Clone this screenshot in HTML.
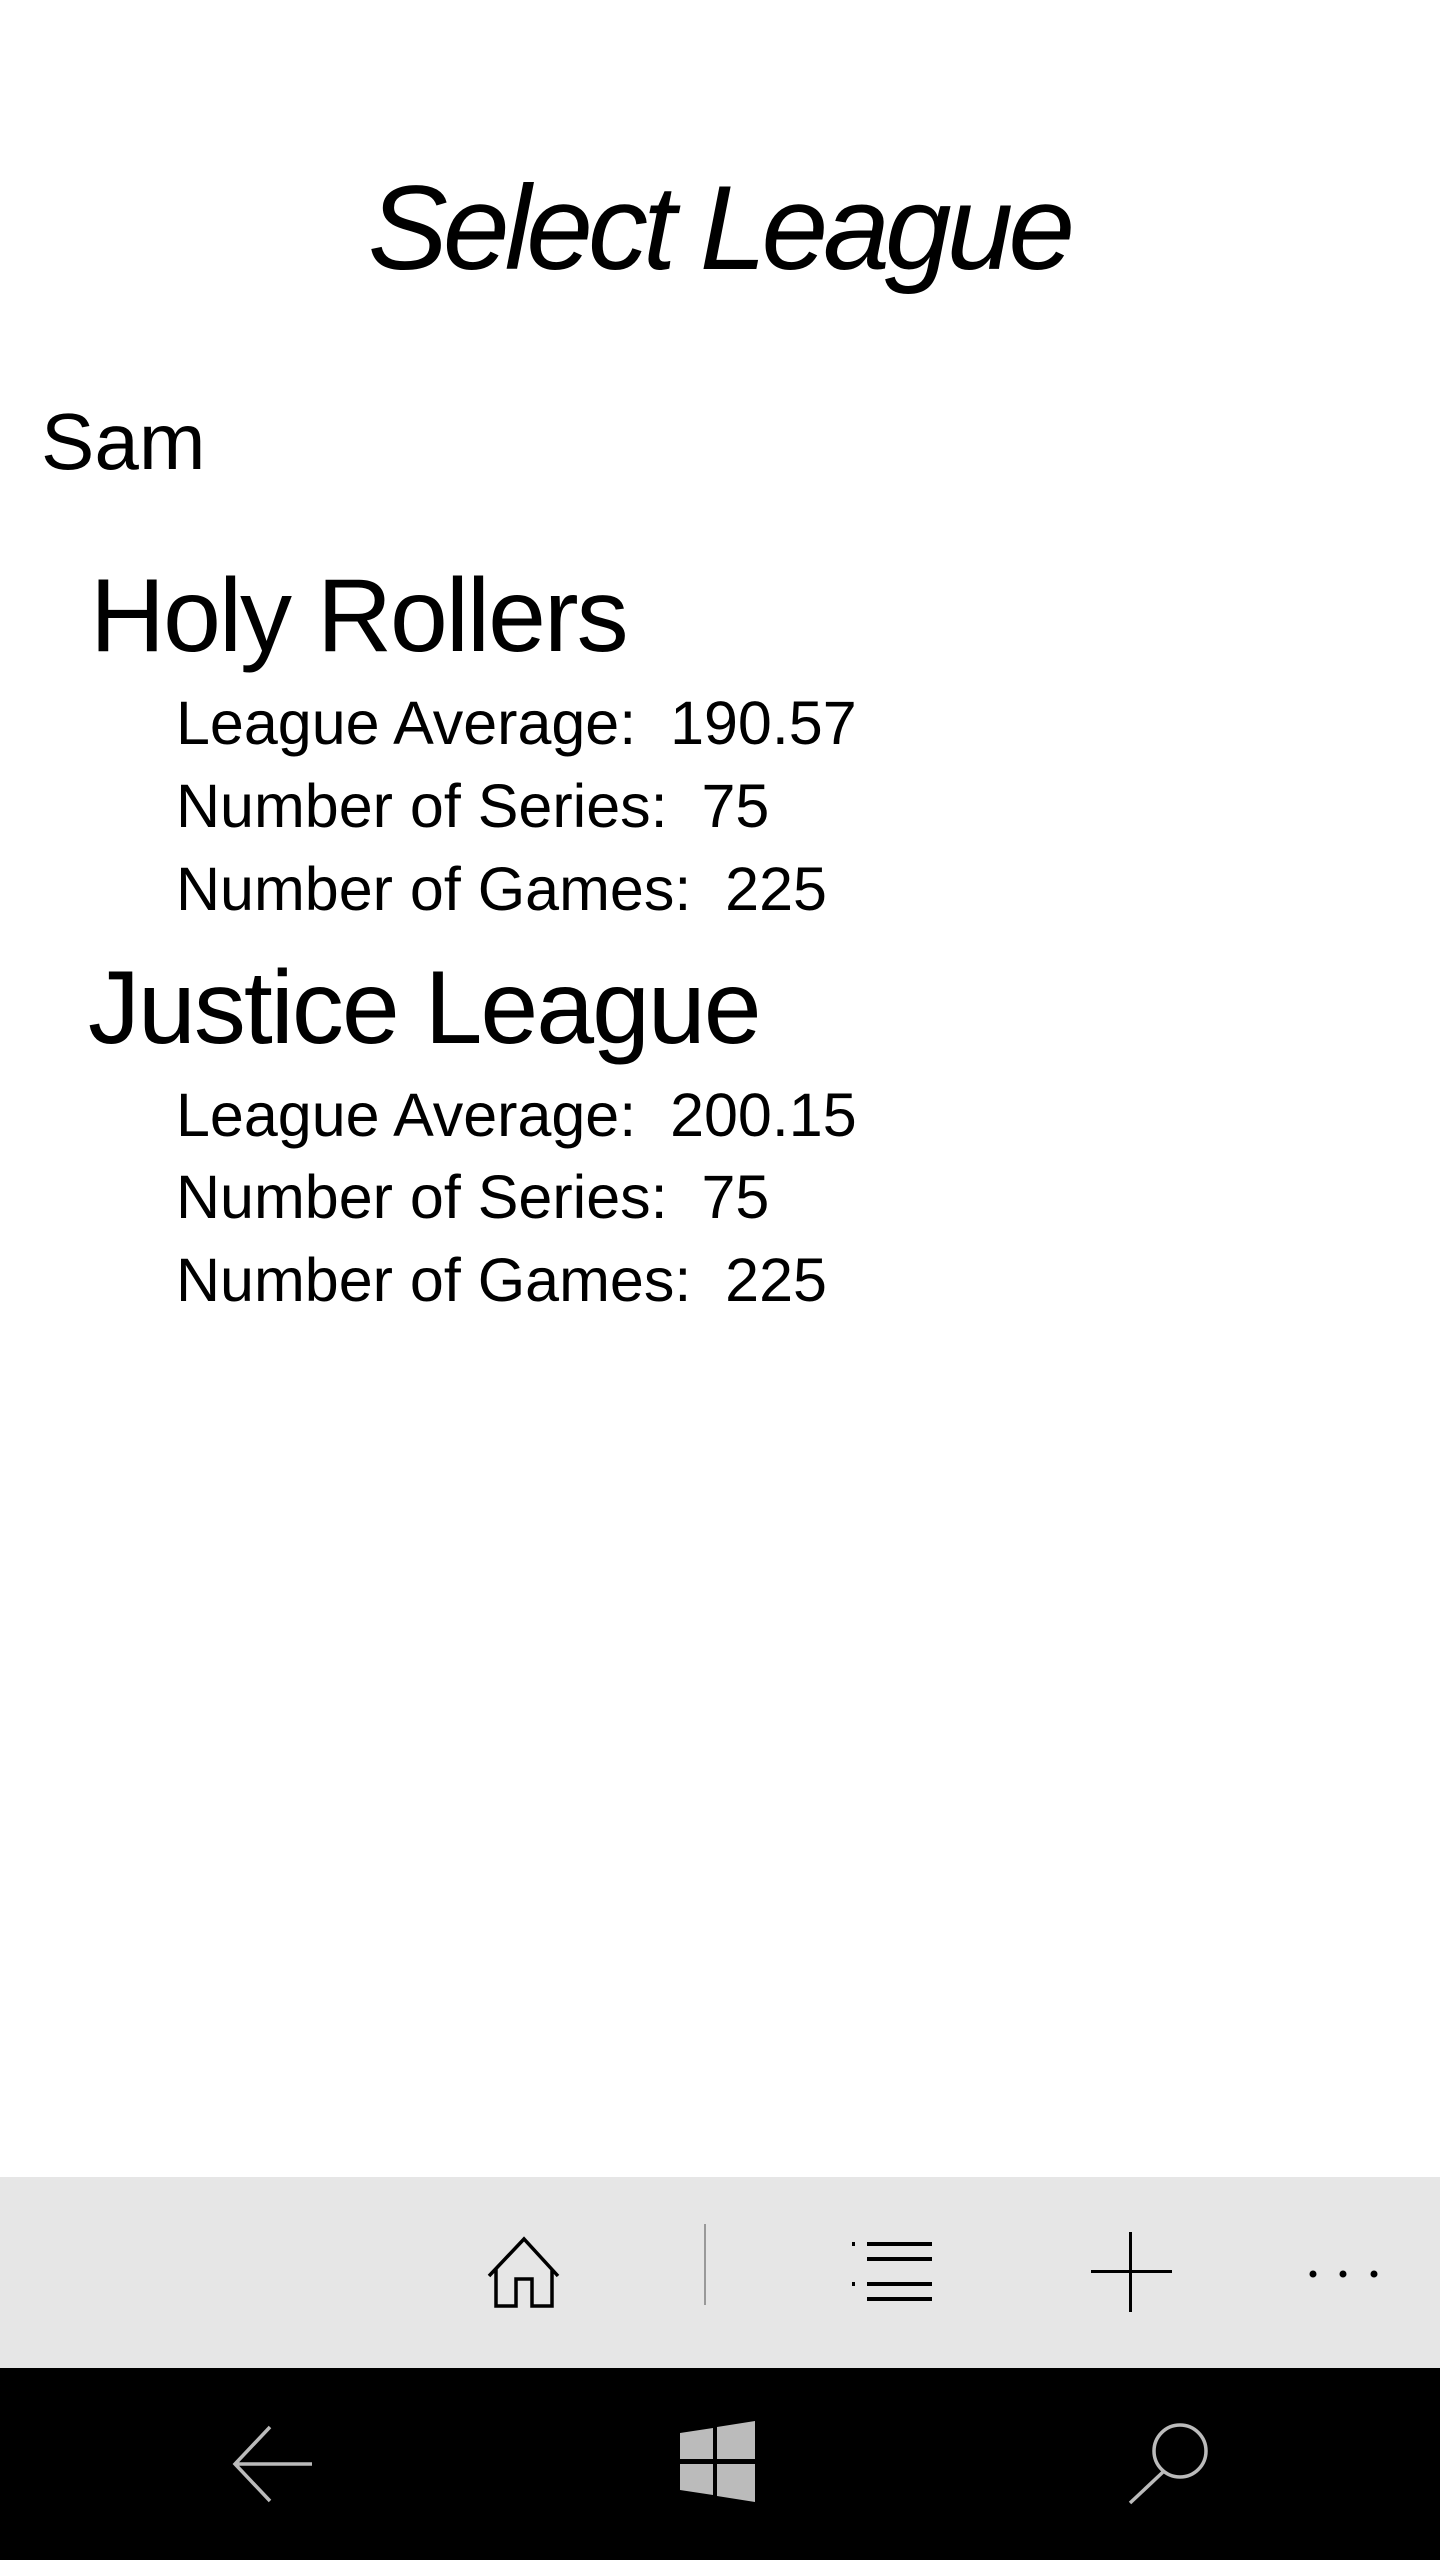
<!DOCTYPE html>
<html><head><meta charset="utf-8"><style>
html,body{margin:0;padding:0;}
body{width:1440px;height:2560px;position:relative;background:#fff;overflow:hidden;font-family:"Liberation Sans",sans-serif;color:#000;}
.t{position:absolute;line-height:1;white-space:pre;}
.d{font-size:61px;left:176px;}
</style></head><body>
<div class="t" style="font-size:120px;font-style:italic;letter-spacing:-5px;left:0;width:1438px;text-align:center;top:168px;">Select League</div>
<div class="t" style="font-size:80px;left:41px;top:402px;">Sam</div>
<div class="t" style="font-size:104px;left:90px;top:564px;letter-spacing:-2px;">Holy Rollers</div>
<div class="t d" style="top:693px;">League Average:  190.57</div>
<div class="t d" style="top:776px;">Number of Series:  75</div>
<div class="t d" style="top:859px;">Number of Games:  225</div>
<div class="t" style="font-size:104px;left:88px;top:956px;letter-spacing:-2px;">Justice League</div>
<div class="t d" style="top:1085px;">League Average:  200.15</div>
<div class="t d" style="top:1167px;">Number of Series:  75</div>
<div class="t d" style="top:1250px;">Number of Games:  225</div>

<div style="position:absolute;left:0;top:2177px;width:1440px;height:191px;background:#e6e6e6;"></div>
<div style="position:absolute;left:0;top:2368px;width:1440px;height:192px;background:#000;"></div>

<svg width="1440" height="2560" style="position:absolute;left:0;top:0" xmlns="http://www.w3.org/2000/svg">
 <!-- home -->
 <path d="M489 2276 L524 2239 L558 2276 M496 2269 V2306 H516 V2279 H532 V2306 H552 V2269" fill="none" stroke="#000" stroke-width="3.5"/>
 <!-- separator -->
 <rect x="704" y="2224" width="2" height="81" fill="#999"/>
 <!-- list -->
 <g fill="#000">
  <rect x="852" y="2242" width="3" height="4"/><rect x="867" y="2242" width="65" height="4"/>
  <rect x="867" y="2257" width="65" height="4"/>
  <rect x="852" y="2282" width="3" height="4"/><rect x="867" y="2282" width="65" height="4"/>
  <rect x="867" y="2297" width="65" height="4"/>
 </g>
 <!-- plus -->
 <rect x="1129" y="2232" width="3" height="80" fill="#000"/>
 <rect x="1091" y="2270" width="81" height="3" fill="#000"/>
 <!-- dots -->
 <circle cx="1313" cy="2274" r="3.5" fill="#000"/><circle cx="1343" cy="2274" r="3.5" fill="#000"/><circle cx="1374" cy="2274" r="3.5" fill="#000"/>
 <!-- back -->
 <path d="M270 2427 L235 2464 L270 2501 M235 2464 H312" fill="none" stroke="#bbb" stroke-width="3.5"/>
 <!-- windows -->
 <g fill="#bbb">
  <path d="M680 2433 L713 2428 V2459 H680 Z"/>
  <path d="M717 2427 L755 2421 V2459 H717 Z"/>
  <path d="M680 2464 H713 V2495 L680 2490 Z"/>
  <path d="M717 2464 H755 V2502 L717 2496 Z"/>
 </g>
 <!-- search -->
 <ellipse cx="1180" cy="2451" rx="26" ry="26" fill="none" stroke="#bbb" stroke-width="3.5"/>
 <path d="M1163 2472 L1130 2503" stroke="#bbb" stroke-width="3.5"/>
</svg>
</body></html>
